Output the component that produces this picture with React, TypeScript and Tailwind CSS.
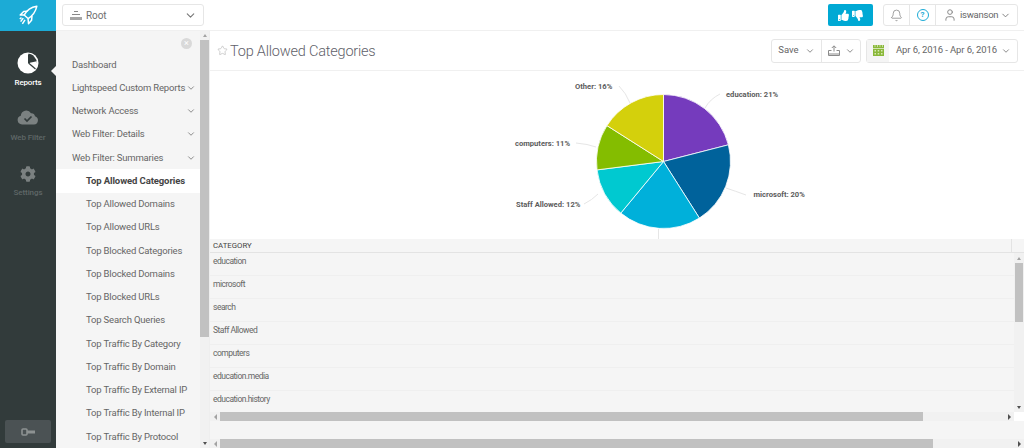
import { Bell, ChevronDown, Star, User } from "lucide-react";
import { FaThumbsUp, FaThumbsDown, FaCog } from "react-icons/fa";

const menu: { label: string; arrow?: boolean; sub?: boolean; active?: boolean }[] = [
  { label: "Dashboard" },
  { label: "Lightspeed Custom Reports", arrow: true },
  { label: "Network Access", arrow: true },
  { label: "Web Filter: Details", arrow: true },
  { label: "Web Filter: Summaries", arrow: true },
  { label: "Top Allowed Categories", sub: true, active: true },
  { label: "Top Allowed Domains", sub: true },
  { label: "Top Allowed URLs", sub: true },
  { label: "Top Blocked Categories", sub: true },
  { label: "Top Blocked Domains", sub: true },
  { label: "Top Blocked URLs", sub: true },
  { label: "Top Search Queries", sub: true },
  { label: "Top Traffic By Category", sub: true },
  { label: "Top Traffic By Domain", sub: true },
  { label: "Top Traffic By External IP", sub: true },
  { label: "Top Traffic By Internal IP", sub: true },
  { label: "Top Traffic By Protocol", sub: true },
];

const rows = ["education", "microsoft", "search", "Staff Allowed", "computers", "education.media", "education.history"];

const slices = [
  { v: 21, c: "#753bbd" },
  { v: 20, c: "#00629b" },
  { v: 20, c: "#00b0da" },
  { v: 12, c: "#00c9d0" },
  { v: 11, c: "#84bd00" },
  { v: 16, c: "#d4d00c" },
];

function Pie() {
  const cx = 183.5, cy = 90.5, r = 67;
  let acc = 0;
  const paths = slices.map((s) => {
    const a0 = (acc / 100) * 2 * Math.PI;
    acc += s.v;
    const a1 = (acc / 100) * 2 * Math.PI;
    const d = `M${cx} ${cy}L${cx + r * Math.sin(a0)} ${cy - r * Math.cos(a0)}A${r} ${r} 0 0 1 ${cx + r * Math.sin(a1)} ${cy - r * Math.cos(a1)}Z`;
    return <path key={s.c} d={d} fill={s.c} stroke="#fff" strokeWidth="0.8" />;
  });
  const labelClass = "fill-[#5c5c5c] text-[7.6px] font-bold";
  return (
    <svg width="340" height="168" viewBox="0 0 340 168" className="block">
      <g fill="none" stroke="#e6e6e6" strokeWidth="1">
        <path d="M225 37Q230 28 240 23" />
        <path d="M246 117Q255 120 266 124" />
        <path d="M178.500 158V168" />
        <path d="M118 123Q112 129 104 133" />
        <path d="M116 76Q108 73 96 72" />
        <path d="M150 32Q146 22 139 15" />
      </g>
      {paths}
      <text x="246" y="25.500" className={labelClass}>education: 21%</text>
      <text x="273.500" y="125.500" className={labelClass}>microsoft: 20%</text>
      <text x="36" y="135.500" className={labelClass}>Staff Allowed: 12%</text>
      <text x="35" y="75" className={labelClass}>computers: 11%</text>
      <text x="95" y="18" className={labelClass}>Other: 16%</text>
    </svg>
  );
}

function Chev({ className }: { className: string }) {
  return <ChevronDown className={className} strokeWidth={2} />;
}

function HBar({ thumb, corner }: { thumb: string; corner?: boolean }) {
  return (
    <div className="flex h-[9px] shrink-0 bg-[#f1f1f1]">
      <div className="flex w-[10px] shrink-0 items-center justify-center">
        <div className="h-0 w-0 border-y-[3px] border-r-[3px] border-y-transparent border-r-[#a3a3a3]" />
      </div>
      <div className="min-w-0 flex-1">
        <div className={`h-full bg-[#c1c1c1] ${thumb}`} />
      </div>
      <div className="flex w-[10px] shrink-0 items-center justify-center">
        <div className="h-0 w-0 border-y-[3px] border-l-[3px] border-y-transparent border-l-[#505050]" />
      </div>
      {corner && <div className="w-[10px] shrink-0 bg-white" />}
    </div>
  );
}

export default function App() {
  return (
    <div className="flex h-[448px] w-[1024px] overflow-hidden bg-white font-['Roboto',sans-serif] text-[#666]">
      <aside className="flex w-[56px] shrink-0 flex-col items-stretch bg-[#323b3b]">
        <div className="flex h-[31px] shrink-0 items-center justify-center bg-[#1cabd6]">
          <svg width="21" height="21" viewBox="0 0 22 24" fill="none" stroke="#fff" strokeWidth="1.700" strokeLinejoin="round">
            <path d="M20.500 1.500C14 2.500 9 6 6 11.500L10.500 15.500C15.500 12.500 19 8 20.500 1.500Z" />
            <path d="M6 11.500L1.500 11.500L5.500 7.500L10 7" />
            <path d="M10.500 15.500L11 21.500L14.500 17.500L15 12.500" />
            <path d="M5 15L2 19M7 17L4 21.500M3 14.500L1 16" />
          </svg>
        </div>
        <div className="relative mt-[21px] flex flex-col items-center">
          <svg width="22" height="22" viewBox="0 0 22 22" className="block">
            <circle cx="11" cy="11" r="10.500" fill="#fff" />
            <path d="M11 11V2.200A8.800 8.800 0 0 1 19.800 11Z" fill="#323b3b" />
            <path d="M11.500 1.500Q15 2 17 4L12.500 9.500Z" fill="#323b3b" />
            <path d="M11.500 11L18.500 17" stroke="#323b3b" strokeWidth="1.200" />
            <path d="M12.800 10.800L19.900 9.300Q20.200 12 18.900 14.500Z" fill="#fff" />
          </svg>
          <span className="mt-[3px] text-[8px] leading-[12px] font-medium tracking-[-0.2px] text-white">Reports</span>
          <div className="absolute top-[14px] right-0 h-0 w-0 border-y-[5px] border-r-[5px] border-y-transparent border-r-[#f5f5f5]" />
        </div>
        <div className="mt-[20px] flex flex-col items-center">
          <svg width="22" height="16" viewBox="0 0 22 16" className="block">
            <path d="M5 15.500A4.500 4.500 0 0 1 3.800 6.700 5.500 5.500 0 0 1 14 4.200 3.800 3.800 0 0 1 18 7.300 4.200 4.200 0 0 1 17 15.500Z" fill="#7b8181" />
            <path d="M7.500 9.500L10 12L14.500 7.500" fill="none" stroke="#323b3b" strokeWidth="1.700" />
          </svg>
          <span className="mt-[7px] text-[8px] leading-[12px] font-medium tracking-[-0.1px] text-[#5f6767]">Web Filter</span>
        </div>
        <div className="mt-[22px] flex flex-col items-center">
          <FaCog className="h-[16px] w-[16px] text-[#7b8181]" />
          <span className="mt-[5px] text-[8px] leading-[12px] font-medium tracking-[-0.1px] text-[#5f6767]">Settings</span>
        </div>
        <div className="mx-[5px] mt-auto mb-[5px] flex h-[23px] items-center justify-center rounded-[2px] bg-[#4b5254]">
          <svg width="14" height="8" viewBox="0 0 14 8" className="block">
            <rect x="1" y="1" width="5" height="6" rx="1" fill="none" stroke="#8d9292" strokeWidth="1.600" />
            <rect x="6" y="2.500" width="8" height="3" fill="#8d9292" />
          </svg>
        </div>
      </aside>

      <div className="flex min-w-0 flex-1 flex-col">
        <header className="flex h-[31px] shrink-0 items-center border-b border-[#f0f0f0] bg-white pr-[6px] pl-[6px]">
          <div className="flex h-[22px] w-[142px] items-center rounded-[3px] border border-[#e6e6e6] pr-[6px] pl-[7px] text-[10px] tracking-[-0.1px]">
            <svg width="12" height="9" viewBox="0 0 12 9" className="mr-[4px] block">
              <rect x="4" y="0" width="4" height="1" fill="#8a8a8a" />
              <rect x="2" y="3" width="8" height="1" fill="#8a8a8a" />
              <rect x="0" y="6" width="12" height="3" fill="#a6a6a6" />
            </svg>
            <span className="flex-1 text-[#707070]">Root</span>
            <Chev className="h-[13px] w-[13px] text-[#777]" />
          </div>
          <div className="ml-auto flex h-[22px] w-[45px] items-center justify-center gap-[3px] rounded-[2px] bg-[#00a9d4] text-white">
            <FaThumbsUp className="h-[11px] w-[11px]" />
            <FaThumbsDown className="h-[11px] w-[11px]" />
          </div>
          <div className="ml-[10px] flex h-[22px] w-[135px] items-center rounded-[3px] border border-[#e6e6e6]">
            <div className="flex h-full w-[26px] items-center justify-center border-r border-[#e6e6e6]">
              <Bell className="h-[13px] w-[13px] text-[#8a8a8a]" strokeWidth={1.5} />
            </div>
            <div className="flex h-full w-[26px] items-center justify-center border-r border-[#e6e6e6]">
              <div className="flex h-[12px] w-[12px] items-center justify-center rounded-full border-[1.5px] border-[#1cabd6] text-[8px] leading-none font-bold text-[#1cabd6]">?</div>
            </div>
            <User className="ml-[7px] h-[14px] w-[14px] text-[#8a8a8a]" strokeWidth={1.7} />
            <span className="ml-[3px] flex-1 text-[9.500px] tracking-[-0.25px] text-[#666]">iswanson</span>
            <Chev className="mr-[6px] h-[11px] w-[11px] text-[#777]" />
          </div>
        </header>

        <div className="flex min-h-0 flex-1">
          <nav className="relative flex w-[154px] shrink-0 border-r border-[#eee] bg-[#f5f5f5]">
            <div className="min-w-0 flex-1 pt-[22px]">
              {menu.map((m) => (
                <div
                  key={m.label}
                  className={`flex h-[23.250px] items-center text-[9.500px] whitespace-nowrap ${m.sub ? "pl-[30px]" : "pl-[16px]"} ${m.active ? "bg-white font-bold tracking-[-0.1px] text-[#444]" : "tracking-[-0.18px] text-[#666]"}`}
                >
                  <span className="flex-1">{m.label}</span>
                  {m.arrow && <Chev className="mr-[4px] h-[10px] w-[10px] text-[#777]" />}
                </div>
              ))}
            </div>
            <div className="flex w-[9px] shrink-0 flex-col bg-[#f1f1f1]">
              <div className="flex h-[9px] items-center justify-center">
                <div className="h-0 w-0 border-x-[2.500px] border-b-[3px] border-x-transparent border-b-[#a3a3a3]" />
              </div>
              <div className="h-[297px] bg-[#c1c1c1]" />
              <div className="mt-auto flex h-[9px] items-center justify-center">
                <div className="h-0 w-0 border-x-[2.500px] border-t-[3px] border-x-transparent border-t-[#505050]" />
              </div>
            </div>
            <div className="absolute top-[7px] right-[17px] flex h-[11px] w-[11px] items-center justify-center rounded-full bg-[#d9d9d9] text-[9px] leading-none text-white">×</div>
          </nav>

          <main className="flex min-w-0 flex-1 flex-col">
            <div className="flex h-[40px] shrink-0 items-center border-b border-[#f0f0f0] pr-[6px] pl-[7px]">
              <Star className="mr-[2px] h-[11px] w-[11px] text-[#bbb]" strokeWidth={1.5} />
              <h1 className="pt-[2px] text-[14.500px] font-light tracking-[-0.2px] text-[#5f5f6a]">Top Allowed Categories</h1>
              <div className="ml-auto flex h-[24px] w-[90px] items-center rounded-[3px] border border-[#e6e6e6] text-[9.500px]">
                <div className="flex h-full w-[50px] items-center justify-center gap-[6px] border-r border-[#e6e6e6]">
                  <span>Save</span>
                  <Chev className="h-[10px] w-[10px] text-[#777]" />
                </div>
                <div className="flex flex-1 items-center justify-center gap-[5px]">
                  <svg width="12" height="11" viewBox="0 0 12 11" className="block" fill="none" stroke="#8a8a8a">
                    <path d="M6 6.500V1M3.800 3L6 0.800 8.200 3" />
                    <path d="M3.500 5.500H0.500V10.500H11.500V5.500H8.500" />
                    <path d="M1 9H11" />
                  </svg>
                  <Chev className="h-[10px] w-[10px] text-[#777]" />
                </div>
              </div>
              <div className="ml-[5px] flex h-[24px] w-[152px] items-center rounded-[3px] border border-[#e6e6e6] text-[9.500px]">
                <div className="flex h-full w-[22px] items-center justify-center bg-[#f5f5f5]">
                  <svg width="11" height="11" viewBox="0 0 11 11" className="block">
                    <rect width="11" height="11" fill="#8ab83a" />
                    <path d="M1.500 0.500h1v1h-1zM4 0.500h1v1H4zM6.500 0.500h1v1h-1zM9 0.500h1v1H9z" fill="#fff" />
                    <rect x="0" y="3" width="11" height="0.800" fill="#e4f0cf" />
                    <path d="M1.500 5h1.500v1.500H1.500zM4.700 5h1.500v1.500H4.700zM8 5h1.500v1.500H8zM1.500 8h1.500v1.500H1.500zM4.700 8h1.500v1.500H4.700zM8 8h1.500v1.500H8z" fill="#d6e8b4" />
                  </svg>
                </div>
                <span className="ml-[7px] flex-1 tracking-[-0.1px] whitespace-nowrap">Apr 6, 2016 - Apr 6, 2016</span>
                <Chev className="mr-[6px] h-[10px] w-[10px] text-[#777]" />
              </div>
            </div>

            <div className="h-[168px] shrink-0 overflow-hidden pl-[270px]">
              <Pie />
            </div>

            <div className="flex min-h-0 flex-1 flex-col bg-[#f5f5f5]">
              <div className="flex h-[14px] shrink-0 items-center border-b border-[#e3e3e3] text-[7.800px] text-[#444]">
                <span className="flex-1 pl-[3px]">CATEGORY</span>
                <div className="h-full w-[13px] border-l border-[#e3e3e3]" />
              </div>
              <div className="flex h-[159px] shrink-0">
                <div className="min-w-0 flex-1">
                  {rows.map((r) => (
                    <div key={r} className="h-[23px] border-b border-[#efefef] pt-[2px] pl-[3px] text-[8.500px] leading-[13px] tracking-[-0.5px] text-[#666] last:border-b-0">
                      {r}
                    </div>
                  ))}
                </div>
                <div className="flex w-[10px] shrink-0 flex-col bg-[#f1f1f1]">
                  <div className="flex h-[10px] items-center justify-center">
                    <div className="h-0 w-0 border-x-[2.500px] border-b-[3px] border-x-transparent border-b-[#a3a3a3]" />
                  </div>
                  <div className="mx-[1px] h-[59px] bg-[#c1c1c1]" />
                  <div className="mt-auto flex h-[10px] items-center justify-center">
                    <div className="h-0 w-0 border-x-[2.500px] border-t-[3px] border-x-transparent border-t-[#505050]" />
                  </div>
                </div>
              </div>
              <HBar thumb="w-[703px]" corner />
              <div className="flex-1" />
              <HBar thumb="w-[713px]" />
            </div>
          </main>
        </div>
      </div>
    </div>
  );
}
